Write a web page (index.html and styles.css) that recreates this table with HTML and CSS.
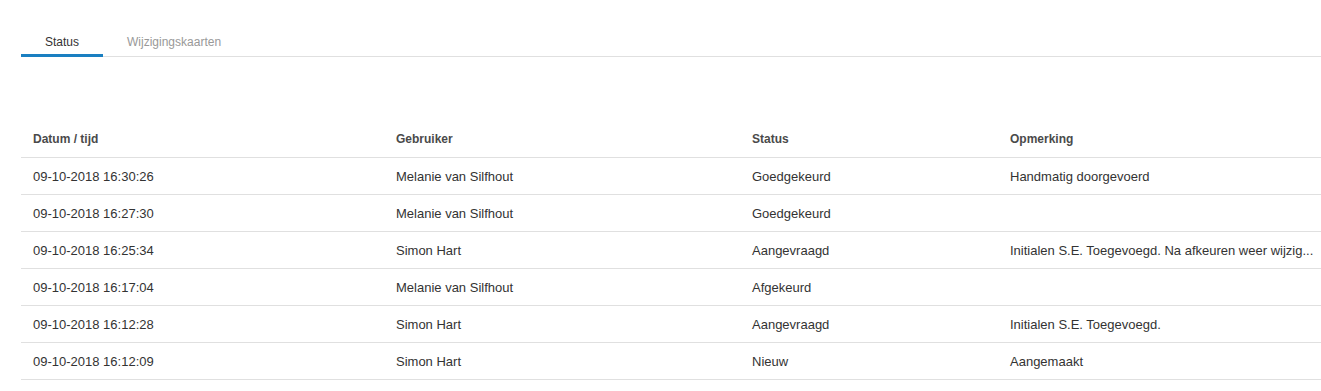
FILE: index.html
```html
<!DOCTYPE html>
<html lang="nl">
<head>
<meta charset="utf-8">
<title>Status</title>
<link rel="stylesheet" href="styles.css">
</head>
<body>
<div class="page">
  <nav class="tabs">
    <div class="tab tab-active">Status</div>
    <div class="tab">Wijzigingskaarten</div>
  </nav>
  <table class="log">
    <colgroup>
      <col class="c1"><col class="c2"><col class="c3"><col class="c4">
    </colgroup>
    <thead>
      <tr><th>Datum / tijd</th><th>Gebruiker</th><th>Status</th><th>Opmerking</th></tr>
    </thead>
    <tbody>
      <tr><td>09-10-2018 16:30:26</td><td>Melanie van Silfhout</td><td>Goedgekeurd</td><td>Handmatig doorgevoerd</td></tr>
      <tr><td>09-10-2018 16:27:30</td><td>Melanie van Silfhout</td><td>Goedgekeurd</td><td></td></tr>
      <tr><td>09-10-2018 16:25:34</td><td>Simon Hart</td><td>Aangevraagd</td><td>Initialen S.E. Toegevoegd. Na afkeuren weer wijzig...</td></tr>
      <tr><td>09-10-2018 16:17:04</td><td>Melanie van Silfhout</td><td>Afgekeurd</td><td></td></tr>
      <tr><td>09-10-2018 16:12:28</td><td>Simon Hart</td><td>Aangevraagd</td><td>Initialen S.E. Toegevoegd.</td></tr>
      <tr><td>09-10-2018 16:12:09</td><td>Simon Hart</td><td>Nieuw</td><td>Aangemaakt</td></tr>
    </tbody>
  </table>
</div>
</body>
</html>
```
FILE: styles.css
```css
html, body {
  margin: 0;
  padding: 0;
  background: #fff;
}
body {
  font-family: "Liberation Sans", Arial, sans-serif;
  color: #333;
}
.page {
  padding-left: 21px;
}
.tabs {
  display: flex;
  padding-top: 26px;
  border-bottom: 1px solid #e0e0e0;
}
.tab {
  font-size: 12px;
  line-height: 16px;
  padding: 8px 24px 4px;
  border-bottom: 3px solid transparent;
  margin-bottom: -1px;
  color: #999;
}
.tab-active {
  color: #333;
  border-bottom-color: #1a7fc1;
}
.log {
  margin-top: 64px;
  width: 1300px;
  border-collapse: collapse;
  table-layout: fixed;
}
.c1 { width: 363px; }
.c2 { width: 356px; }
.c3 { width: 258px; }
.c4 { width: 323px; }
.log th, .log td {
  height: 36px;
  padding: 0 4px 0 12px;
  text-align: left;
  border-bottom: 1px solid #e0e0e0;
  white-space: nowrap;
  overflow: hidden;
}
.log th {
  font-size: 12px;
  font-weight: bold;
  color: #4a4a4a;
}
.log td {
  font-size: 13px;
  color: #333;
}
```
